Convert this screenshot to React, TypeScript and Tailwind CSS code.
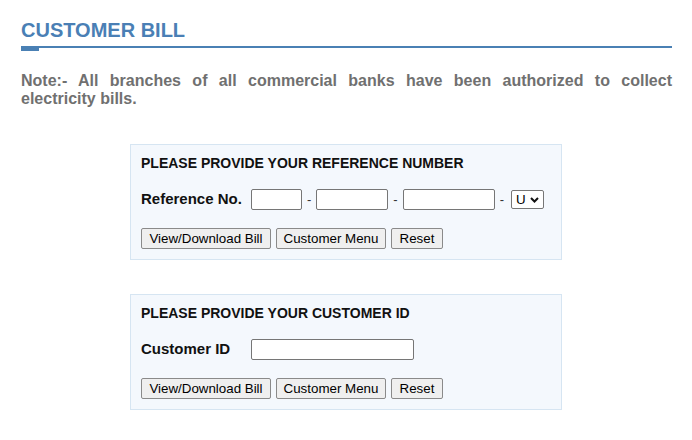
import React from "react";

const font = { fontFamily: '"Liberation Sans", Arial, sans-serif' };

function Dash({ className = "" }: { className?: string }) {
  return <span className={`text-[13px] text-[#333] ${className}`}>-</span>;
}

function TextBox({ w }: { w: string }) {
  return <div className={`h-[21px] ${w} rounded-[2px] border border-[#767676] bg-white`} />;
}

function Buttons() {
  return (
    <div className="mt-[18px] flex items-center gap-[5px]">
      {[
        { label: "View/Download Bill", w: "w-[130px]" },
        { label: "Customer Menu", w: "w-[110px]" },
        { label: "Reset", w: "w-[52px]" },
      ].map((b) => (
        <button
          key={b.label}
          className={`flex h-[21px] ${b.w} items-center justify-center rounded-[2px] border border-[#8a8a8a] bg-[#efefef] text-[13.33px] leading-none text-black`}
        >
          {b.label}
        </button>
      ))}
    </div>
  );
}

function Card({ title, children }: { title: string; children: React.ReactNode }) {
  return (
    <section className="ml-[109px] w-[432px] border border-[#d6e5f2] bg-[#f4f8fd] px-[10px] pb-[10px] pt-[10px]">
      <h2 className="text-[14px] font-bold leading-[16px] text-[#111]">{title}</h2>
      <div className="mt-[18px] flex h-[21px] items-center">
        {children}
      </div>
      <Buttons />
    </section>
  );
}

export default function App() {
  return (
    <div className="min-h-[440px] bg-white pl-[21px] pr-[20px] pt-[18px]" style={font}>
      <h1 className="text-[20px] font-bold leading-[24px] text-[#4a7fb5]">CUSTOMER BILL</h1>
      <div className="relative mt-[4px] h-[2px] bg-[#4a80b4]">
        <div className="absolute left-0 top-0 h-[5px] w-[18px] bg-[#4a80b4]" />
      </div>

      <p className="mt-[24px] text-justify text-[16px] font-bold leading-[18px] text-[#707070]">
        Note:- All branches of all commercial banks have been authorized to collect electricity bills.
      </p>

      <div className="mt-[36px] flex flex-col gap-[34px]">
        <Card title="PLEASE PROVIDE YOUR REFERENCE NUMBER">
          <span className="w-[110px] text-[15px] font-bold text-[#111]">Reference No.</span>
          <TextBox w="w-[51px]" />
          <Dash className="mx-[5px]" />
          <TextBox w="w-[72px]" />
          <Dash className="mx-[5px]" />
          <TextBox w="w-[92px]" />
          <Dash className="ml-[5px] mr-[7px]" />
          <div className="flex h-[19px] w-[33px] items-center justify-between rounded-[2px] border border-[#767676] bg-white pl-[4px] pr-[4px]">
            <span className="text-[13.33px] leading-none text-black">U</span>
            <svg width="9" height="6" viewBox="0 0 9 6">
              <path d="M1 1l3.5 3.5L8 1" fill="none" stroke="#111" strokeWidth="2" />
            </svg>
          </div>
        </Card>

        <Card title="PLEASE PROVIDE YOUR CUSTOMER ID">
          <span className="w-[110px] text-[15px] font-bold text-[#111]">Customer ID</span>
          <TextBox w="w-[163px]" />
        </Card>
      </div>
    </div>
  );
}
